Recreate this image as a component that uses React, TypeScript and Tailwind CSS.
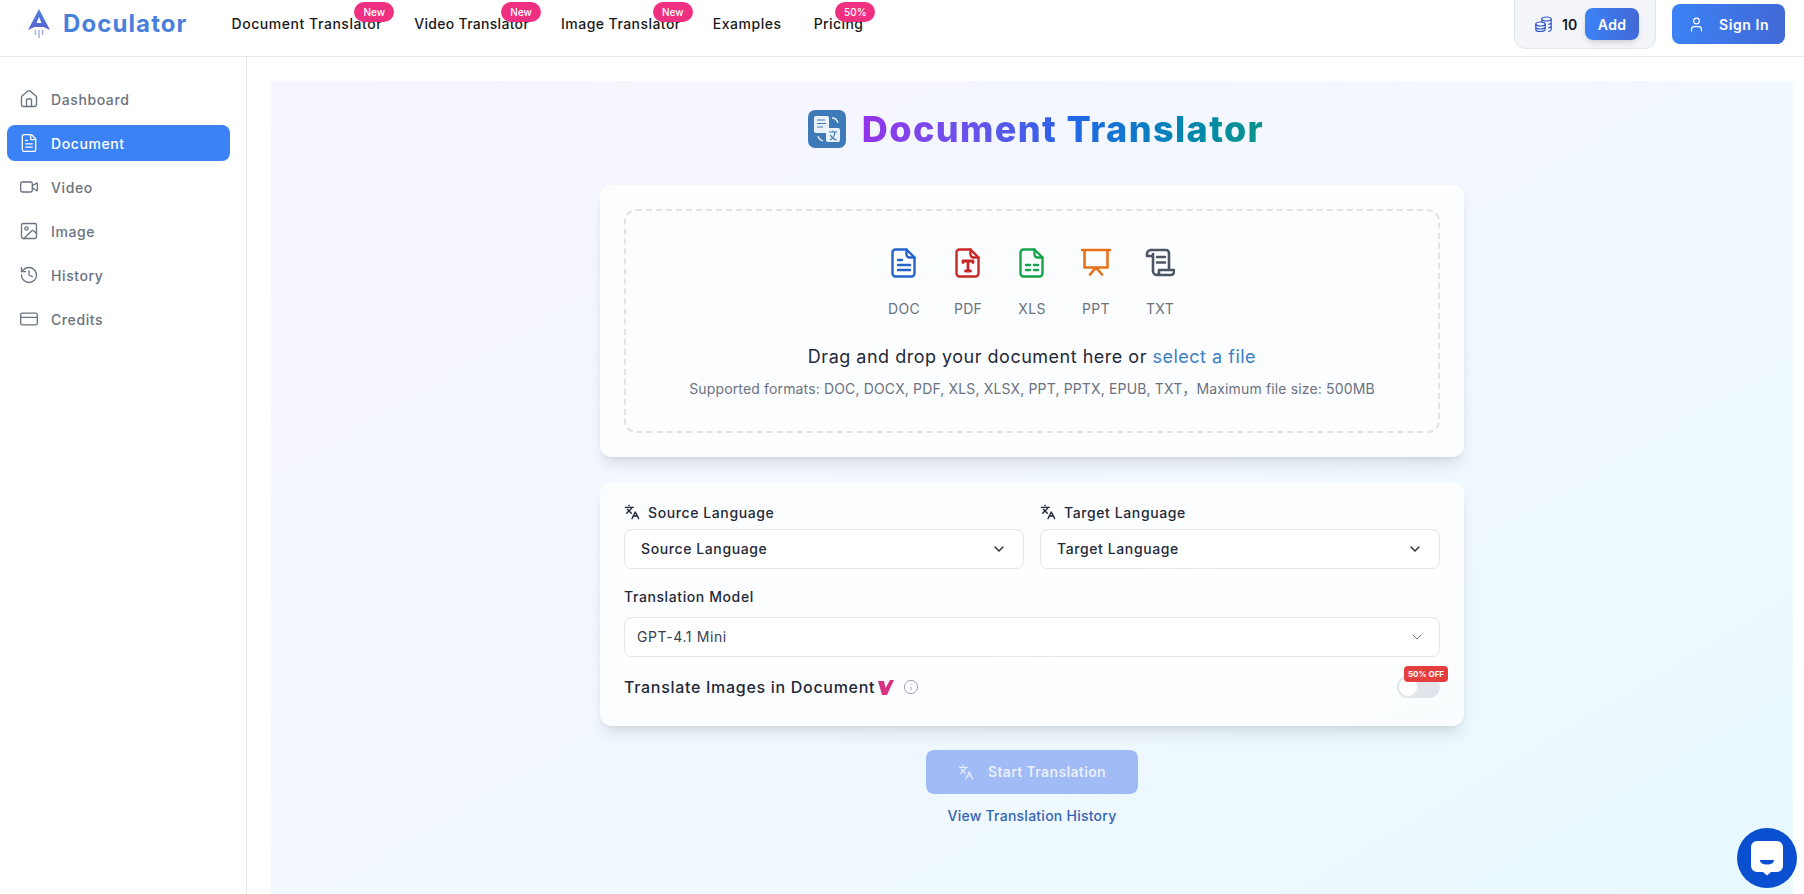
import React from "react";
import { Home, FileText, Video, Image, History, CreditCard, ChevronDown, Languages, User, Info } from "lucide-react";

const Badge = ({ t }: { t: string }) => (
  <span className="absolute right-[-12px] top-[-12px] flex h-[20px] w-[40px] items-center justify-center rounded-full bg-[#ef2f80] text-[10px] font-medium tracking-normal text-white">{t}</span>
);

const NavItem = ({ t, b, cls }: { t: string; b?: string; cls: string }) => (
  <a className={"relative whitespace-nowrap text-[14px] font-medium leading-[20px] text-[#1a1a1a] " + cls}>
    {t}
    {b ? <Badge t={b} /> : null}
  </a>
);

const Side = ({ icon: I, t, active }: { icon: any; t: string; active?: boolean }) => (
  <div className={"flex h-[36px] items-center gap-[12px] rounded-lg pl-[12px] text-[14px] font-medium tracking-[0.6px] " + (active ? "bg-[#3b82f6] text-white" : "text-[#6b7280]")}>
    <I size={20} strokeWidth={1.6} />
    <span>{t}</span>
  </div>
);

const FileShape = ({ c, children }: { c: string; children?: React.ReactNode }) => (
  <svg width="30" height="30" viewBox="0 0 30 30" fill="none" stroke={c} strokeWidth="2.4" strokeLinecap="round" strokeLinejoin="round">
    <path d="M6.5 1.500h11l8 8v16a3 3 0 0 1-3 3h-16a3 3 0 0 1-3-3v-21a3 3 0 0 1 3-3z" />
    <path d="M17.500 1.500v5a3 3 0 0 0 3 3h5" />
    {children}
  </svg>
);

const Doc = () => (
  <FileShape c="#2563c9">
    <path d="M9 12h4M9 17h12M9 22h12" />
  </FileShape>
);
const Pdf = () => (
  <FileShape c="#c62828">
    <path d="M10 14.500v-1.500h10v1.500M15 13v10M12.500 23h5" strokeWidth="2.800" />
  </FileShape>
);
const Xls = () => (
  <FileShape c="#16a34a">
    <path d="M9 17h4M17 17h4M9 22h4M17 22h4" />
  </FileShape>
);
const Ppt = () => (
  <svg width="30" height="30" viewBox="0 0 30 30" fill="none" stroke="#e8701a" strokeWidth="2.600" strokeLinecap="round" strokeLinejoin="round">
    <path d="M1 2h28M3.500 2v17.500h23V2M15 19.500l-6 7M15 19.500l6 7" />
  </svg>
);
const Txt = () => (
  <svg width="30" height="30" viewBox="0 0 30 30" fill="none" stroke="#4b5563" strokeWidth="2.600" strokeLinecap="round" strokeLinejoin="round">
    <path d="M6 2h15a3 3 0 0 1 3 3v16" />
    <path d="M6 2a4 4 0 0 0-4 4v2h6V6M8 6v17a4 4 0 0 0 4 4h14a3 3 0 0 0 3-3v-2H14v2a3 3 0 0 1-2 3" />
    <path d="M12 9h8M12 14.500h8" />
  </svg>
);

const TypeItem = ({ icon, t }: { icon: React.ReactNode; t: string }) => (
  <div className="flex w-[64px] flex-col items-center">
    <div className="flex h-[30px] items-center">{icon}</div>
    <span className="mt-[21px] text-[14px] leading-[20px] tracking-[0.3px] text-[#6b7280]">{t}</span>
  </div>
);

const Select = ({ t }: { t: string }) => (
  <div className="mt-[7px] flex h-[40px] items-center justify-between rounded-lg border border-[#e5e7eb] bg-white pb-[1px] pl-[16px] pr-[16px] text-[14px] font-medium tracking-[0.6px] text-[#1f2937]">
    <span>{t}</span>
    <ChevronDown size={16} strokeWidth={2} className="text-[#1f2937]" />
  </div>
);

const Lang = ({ t }: { t: string }) => (
  <div className="flex-1">
    <div className="flex h-[20px] items-center gap-[8px] text-[14px] font-medium tracking-[0.6px] text-[#1f2937]">
      <Languages size={16} strokeWidth={2} />
      <span>{t}</span>
    </div>
    <Select t={t} />
  </div>
);

export default function App() {
  return (
    <div className="flex h-[894px] w-full flex-col overflow-hidden bg-white font-['Inter','Liberation_Sans','Noto_Sans_CJK_SC',sans-serif]">
      <header className="flex h-[57px] shrink-0 items-center border-b border-[#e5e7eb] bg-white">
        <div className="flex items-center pb-[8px]">
          <svg className="ml-[27px]" width="24" height="30" viewBox="0 0 24 30" fill="none">
            <defs>
              <linearGradient id="logoG" x1="0" y1="0" x2="0" y2="1">
                <stop offset="0" stopColor="#4a86dc" />
                <stop offset="1" stopColor="#5a5fd0" />
              </linearGradient>
            </defs>
            <path d="M12 0L23 21l-6.500-3h-9L1 21z" fill="url(#logoG)" />
            <path d="M12 8l2.500 6h-5z" fill="#ffffff" />
            <path d="M12 21v8M8.500 21v5M15.500 21v5" stroke="#9fb0d8" strokeWidth="1.400" />
          </svg>
          <span className="ml-[12px] text-[24px] font-bold leading-none tracking-[1.1px] text-[#4a7fdc]">Doculator</span>
        </div>
        <nav className="ml-[44px] flex items-center gap-[32px] pb-[8px]">
          <NavItem t="Document Translator" b="New" cls="tracking-[0.55px]" />
          <NavItem t="Video Translator" b="New" cls="tracking-[0.3px]" />
          <NavItem t="Image Translator" b="New" cls="tracking-[0.45px]" />
          <NavItem t="Examples" cls="tracking-[0.55px]" />
          <NavItem t="Pricing" b="50%" cls="tracking-[0.4px]" />
        </nav>
        <div className="ml-auto flex items-start self-start">
          <div className="flex h-[49px] w-[142px] items-center rounded-b-xl border border-t-0 border-[#e5e7eb] bg-[#f3f5f9] pl-[20px]">
            <svg width="17" height="16" viewBox="0 0 17 16" fill="none" stroke="#2f55c8" strokeWidth="1.200">
              <ellipse cx="5.500" cy="8" rx="4.700" ry="2" />
              <path d="M.8 8v5.500c0 1.100 2.100 2 4.700 2s4.700-.9 4.700-2V8M.8 11c0 1.100 2.100 2 4.700 2s4.700-.9 4.700-2" />
              <ellipse cx="11.500" cy="3" rx="4.700" ry="2" />
              <path d="M6.800 3v3M16.200 3v10.500c0 1-1.200 1.800-3 2M16.200 6.500c0 .8-1.200 1.600-3 1.900M16.200 10c0 .8-1.200 1.600-3 1.900" />
            </svg>
            <span className="ml-[10px] text-[14px] font-semibold text-[#111827]">10</span>
            <button className="ml-[8px] flex h-[32px] w-[54px] items-center justify-center rounded-lg bg-linear-to-r from-[#3b82f6] to-[#4169d6] text-[14px] font-semibold tracking-[0.4px] text-white shadow-md">Add</button>
          </div>
          <button className="ml-[16px] mr-[19px] mt-[4px] flex h-[40px] w-[113px] items-center rounded-lg bg-linear-to-r from-[#3b82f6] to-[#4169d6] pl-[16px] text-[14px] font-semibold tracking-[0.6px] text-white">
            <User size={17} strokeWidth={1.7} />
            <span className="ml-[14px]">Sign In</span>
          </button>
        </div>
      </header>
      <div className="flex min-h-0 flex-1">
        <aside className="flex w-[247px] shrink-0 flex-col gap-[8px] border-r border-[#e5e7eb] bg-white pl-[7px] pr-[16px] pt-[24px]">
          <Side icon={Home} t="Dashboard" />
          <Side icon={FileText} t="Document" active />
          <Side icon={Video} t="Video" />
          <Side icon={Image} t="Image" />
          <Side icon={History} t="History" />
          <Side icon={CreditCard} t="Credits" />
        </aside>
        <main className="min-w-0 flex-1 pl-[24px] pr-[11px] pt-[24px]">
          <div className="flex h-[900px] flex-col items-center bg-linear-to-br from-[#f7f5ff] via-[#f2f8ff] to-[#e6f9fe] pt-[29px]">
            <div className="flex h-[38px] items-center pl-[8px]">
              <svg width="38" height="38" viewBox="0 0 38 38" fill="none">
                <rect width="38" height="38" rx="7" fill="#3f7ab8" />
                <rect x="6" y="6" width="15" height="17" rx="2" fill="#eaf1f8" />
                <path d="M9 10h8M9 13.500h9M9 17h6" stroke="#3f7ab8" strokeWidth="1.200" />
                <rect x="18" y="18" width="14" height="14" rx="2" fill="#eaf1f8" />
                <path d="M21 22h8M25 20.500V22M22 30c3-1.500 4.500-4 5-8M22.500 25c1 2.500 3 4 6 5" stroke="#3f7ab8" strokeWidth="1.200" fill="none" />
                <path d="M24 8c3 0 5 1.500 6 5M10 26c.5 2.500 2 4 5 5" stroke="#eaf1f8" strokeWidth="1.300" fill="none" />
              </svg>
              <h1 className="ml-[16px] bg-linear-to-r from-[#9333ea] via-[#2563eb] to-[#0d9488] bg-clip-text text-[36px] font-extrabold leading-[40px] tracking-[1.4px] text-transparent">Document Translator</h1>
            </div>
            <section className="mt-[37px] h-[272px] w-[864px] rounded-xl bg-white/75 p-[24px] shadow-lg">
              <div className="flex h-[224px] flex-col items-center rounded-xl border-2 border-dashed border-[#e0e3e8] pt-[37px]">
                <div className="flex">
                  <TypeItem icon={<Doc />} t="DOC" />
                  <TypeItem icon={<Pdf />} t="PDF" />
                  <TypeItem icon={<Xls />} t="XLS" />
                  <TypeItem icon={<Ppt />} t="PPT" />
                  <TypeItem icon={<Txt />} t="TXT" />
                </div>
                <p className="mt-[24px] text-[18px] leading-[28px] tracking-[0.5px] text-[#1f2937]">
                  Drag and drop your document here or <span className="text-[#3b7fc4]">select a file</span>
                </p>
                <p className="mt-[8px] text-[14px] leading-[20px] tracking-[0.15px] text-[#6b7280]">Supported formats: DOC, DOCX, PDF, XLS, XLSX, PPT, PPTX, EPUB, TXT，Maximum file size: 500MB</p>
              </div>
            </section>
            <section className="mt-[25px] h-[244px] w-[864px] rounded-xl bg-white/75 px-[24px] pt-[20px] shadow-lg">
              <div className="flex gap-[16px]">
                <Lang t="Source Language" />
                <Lang t="Target Language" />
              </div>
              <div className="mt-[18px] text-[14px] font-medium leading-[20px] tracking-[0.6px] text-[#1f2937]">Translation Model</div>
              <div className="mt-[10px] flex h-[40px] items-center justify-between rounded-lg border border-[#e5e7eb] bg-white pb-[1px] pl-[12px] pr-[14px] text-[14px] tracking-[0.6px] text-[#374151]">
                <span>GPT-4.1 Mini</span>
                <ChevronDown size={16} strokeWidth={1.5} className="text-[#6b7280]" />
              </div>
              <div className="mt-[18px] flex h-[24px] items-center">
                <span className="text-[16px] font-medium tracking-[0.7px] text-[#1f2937]">Translate Images in Document</span>
                <svg className="ml-[3px]" width="16" height="15" viewBox="0 0 16 15">
                  <path d="M0 1h6l1.500 7L12 0h4l-7 15H4z" fill="#d63384" />
                </svg>
                <Info className="ml-[9px] text-[#9ca3af]" size={16} strokeWidth={1.5} />
                <div className="relative ml-auto h-[22px] w-[43px] rounded-full bg-[#e1e4ea]">
                  <div className="h-[22px] w-[22px] rounded-full border-2 border-[#e5e7eb] bg-white" />
                  <span className="absolute left-[7px] top-[-10px] flex h-[16px] w-[44px] items-center justify-center rounded bg-[#e53e3e] text-[8px] font-bold text-white">50% OFF</span>
                </div>
              </div>
            </section>
            <button className="mt-[24px] flex h-[44px] w-[212px] items-center rounded-lg bg-[#a0bbf5] pl-[32px] text-[14px] font-semibold leading-[18px] tracking-[0.35px] text-[#e8effd]">
              <Languages size={16} strokeWidth={1.8} />
              <span className="ml-[14px]">Start Translation</span>
            </button>
            <a className="mt-[11px] text-[14px] font-medium tracking-[0.25px] text-[#3563b5]">View Translation History</a>
          </div>
        </main>
      </div>
      <div className="fixed left-[1737px] top-[828px] flex h-[60px] w-[60px] items-center justify-center rounded-full bg-[#0b4fd1]">
        <svg width="34" height="36" viewBox="0 0 34 36">
          <path d="M7 1h20a6 6 0 0 1 6 6v19a6 6 0 0 1-6 6h-6l-4 3.500L13 32H7a6 6 0 0 1-6-6V7a6 6 0 0 1 6-6z" fill="#ffffff" />
          <path d="M10 20h14c0 3-3 4.500-7 4.500s-7-1.500-7-4.500z" fill="#0b4fd1" />
        </svg>
      </div>
    </div>
  );
}
